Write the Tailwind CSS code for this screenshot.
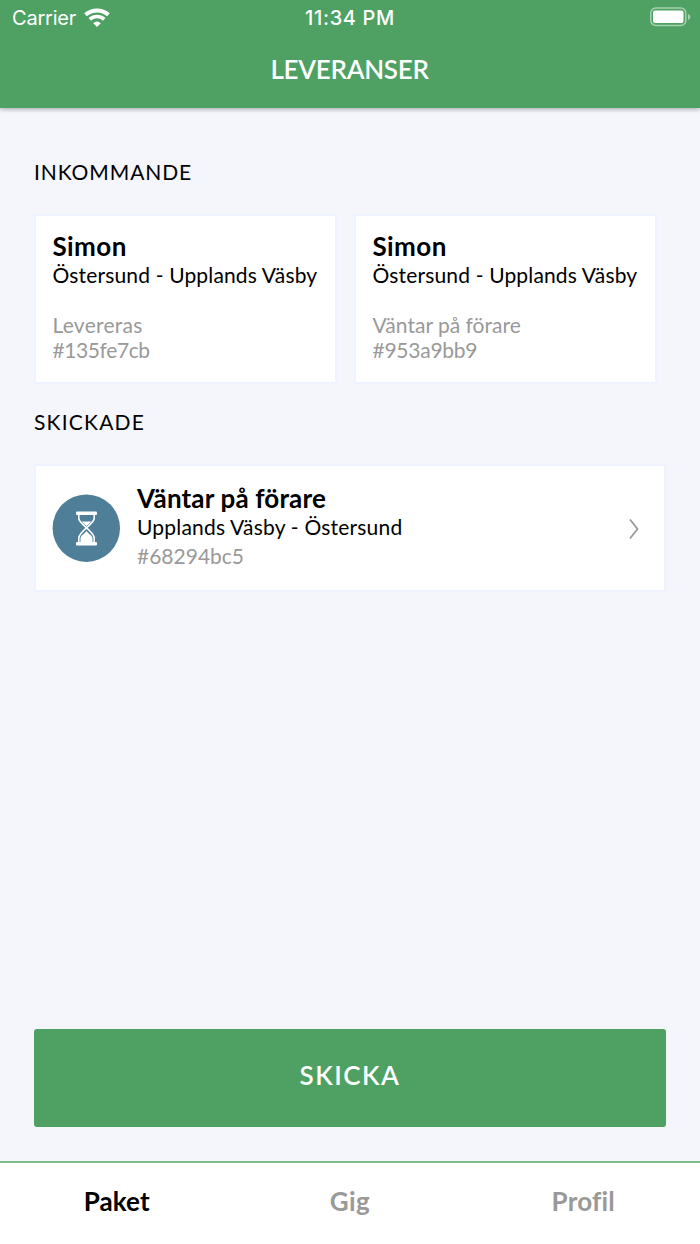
<!DOCTYPE html>
<html lang="sv">
<head>
<meta charset="utf-8">
<title>Leveranser</title>
<script src="https://cdn.jsdelivr.net/npm/@tailwindcss/browser@4"></script>
</head>
<body class="flex h-[1244px] w-[700px] flex-col overflow-hidden bg-[#f4f6fc] font-[Lato,sans-serif] text-black whitespace-nowrap">
  <header class="flex h-[108px] flex-none flex-col bg-[#4ea162] text-white shadow-[0_1px_5px_rgba(0,0,0,0.35)]">
    <div class="grid h-9 grid-cols-3 items-center font-[Inter,sans-serif] leading-none">
      <div class="flex items-center gap-2 pl-3">
        <span class="text-[20px] tracking-[-0.2px]">Carrier</span>
        <svg class="-mt-0.5 h-[19px] w-[26px]" viewBox="0 0 26 19" fill="none" stroke="white">
          <path d="M1.500 6.800C8 .9 18 .9 24.500 6.800" stroke-width="4"/>
          <path d="M5.800 11.300C10 7.500 16 7.500 20.200 11.300" stroke-width="3.600"/>
          <path d="M9.200 15.200Q13 11.800 16.800 15.200L13 18.900Z" fill="white" stroke="none"/>
        </svg>
      </div>
      <div class="text-center text-[20px] font-medium tracking-[0.65px]">11:34 PM</div>
      <div class="flex justify-end pr-[9px]">
        <svg class="-mt-0.5 h-5 w-[42px]" viewBox="0 0 42 20" fill="none">
          <rect x="1.800" y="1" width="35" height="17.500" rx="5" stroke="white" stroke-opacity=".5" stroke-width="1.500"/>
          <rect x="4" y="3.500" width="30.500" height="12.500" rx="2" fill="white"/>
          <path d="M39 7q2.500 1 2.500 3t-2.500 3z" fill="white" fill-opacity=".5"/>
        </svg>
      </div>
    </div>
    <h1 class="flex h-[66px] items-center justify-center pr-px text-[26px] leading-none font-semibold tracking-[-0.3px]">LEVERANSER</h1>
  </header>

  <main class="flex flex-1 flex-col px-[34px]">
    <h2 class="mt-12 h-8 text-[21px] leading-8 tracking-[0.9px]">INKOMMANDE</h2>
    <div class="mt-[26px] flex gap-[17px]">
      <article class="h-[170px] w-[303px] border-2 border-[#eff3ff] bg-white px-[16.5px] pt-[15px]">
        <h3 class="text-[26px] leading-[30px] font-bold tracking-[0.4px]">Simon</h3>
        <p class="text-[21px] leading-[27px] tracking-[0.16px]">Östersund - Upplands Väsby</p>
        <p class="mt-6 text-[21px] leading-[25px] tracking-[0.25px] text-[#999]">Levereras</p>
        <p class="text-[21px] leading-[25px] tracking-[-0.4px] text-[#999]">#135fe7cb</p>
      </article>
      <article class="h-[170px] w-[303px] border-2 border-[#eff3ff] bg-white px-[16.5px] pt-[15px]">
        <h3 class="text-[26px] leading-[30px] font-bold tracking-[0.4px]">Simon</h3>
        <p class="text-[21px] leading-[27px] tracking-[0.16px]">Östersund - Upplands Väsby</p>
        <p class="mt-6 text-[21px] leading-[25px] tracking-[0.01px] text-[#999]">Väntar på förare</p>
        <p class="text-[21px] leading-[25px] tracking-[-0.25px] text-[#999]">#953a9bb9</p>
      </article>
    </div>
    <h2 class="mt-[22px] h-8 text-[21px] leading-8 tracking-[1.2px]">SKICKADE</h2>
    <article class="mt-[26px] flex h-[128px] items-center border-2 border-[#eff3ff] bg-white pr-6 pl-4">
      <svg class="size-[68px] flex-none" viewBox="0 0 68 68" fill="none">
        <circle cx="34.300" cy="34.200" r="33.700" fill="#4f7e98"/>
        <rect x="24" y="17.500" width="21" height="3.400" rx="1" fill="white"/>
        <rect x="24" y="48" width="21" height="3.400" rx="1" fill="white"/>
        <path d="M26.800 20v4.500c0 5.500 15.400 13 15.400 19.500v4.500M42.200 20v4.500c0 5.500-15.400 13-15.400 19.500v4.500" stroke="white" stroke-width="1.600"/>
        <path d="M29.500 27.500h10l-5 4.500zM28.500 48v-3.500c0-3 4-4.500 6-7.500 2 3 6 4.500 6 7.500V48z" fill="white"/>
      </svg>
      <div class="-mt-0.5 ml-[17px] flex-1">
        <h3 class="text-[26px] leading-[29px] font-bold tracking-[0.15px]">Väntar på förare</h3>
        <p class="text-[21px] leading-[28px] tracking-[0.2px]">Upplands Väsby - Östersund</p>
        <p class="text-[21px] leading-[29px] text-[#999]">#68294bc5</p>
      </div>
      <svg class="mt-0.5 h-[22px] w-3" viewBox="0 0 12 22" fill="none" stroke="#999" stroke-width="1.800"><path d="M2 1.500 9.500 11 2 20.500"/></svg>
    </article>
    <button class="mt-auto mb-[34px] h-[98px] flex-none rounded-[3px] bg-[#4ea162] pb-1.5 text-[26px] font-semibold tracking-[1.5px] text-white">SKICKA</button>
  </main>

  <nav class="grid h-[83px] flex-none grid-cols-3 border-t-2 border-[#7cbd8b] bg-white text-center text-[26px] leading-[76px] font-bold text-[#999]">
    <span class="tracking-[0.1px] text-black">Paket</span>
    <span class="tracking-[0.4px]">Gig</span>
    <span class="tracking-[0.2px]">Profil</span>
  </nav>
</body>
</html>
